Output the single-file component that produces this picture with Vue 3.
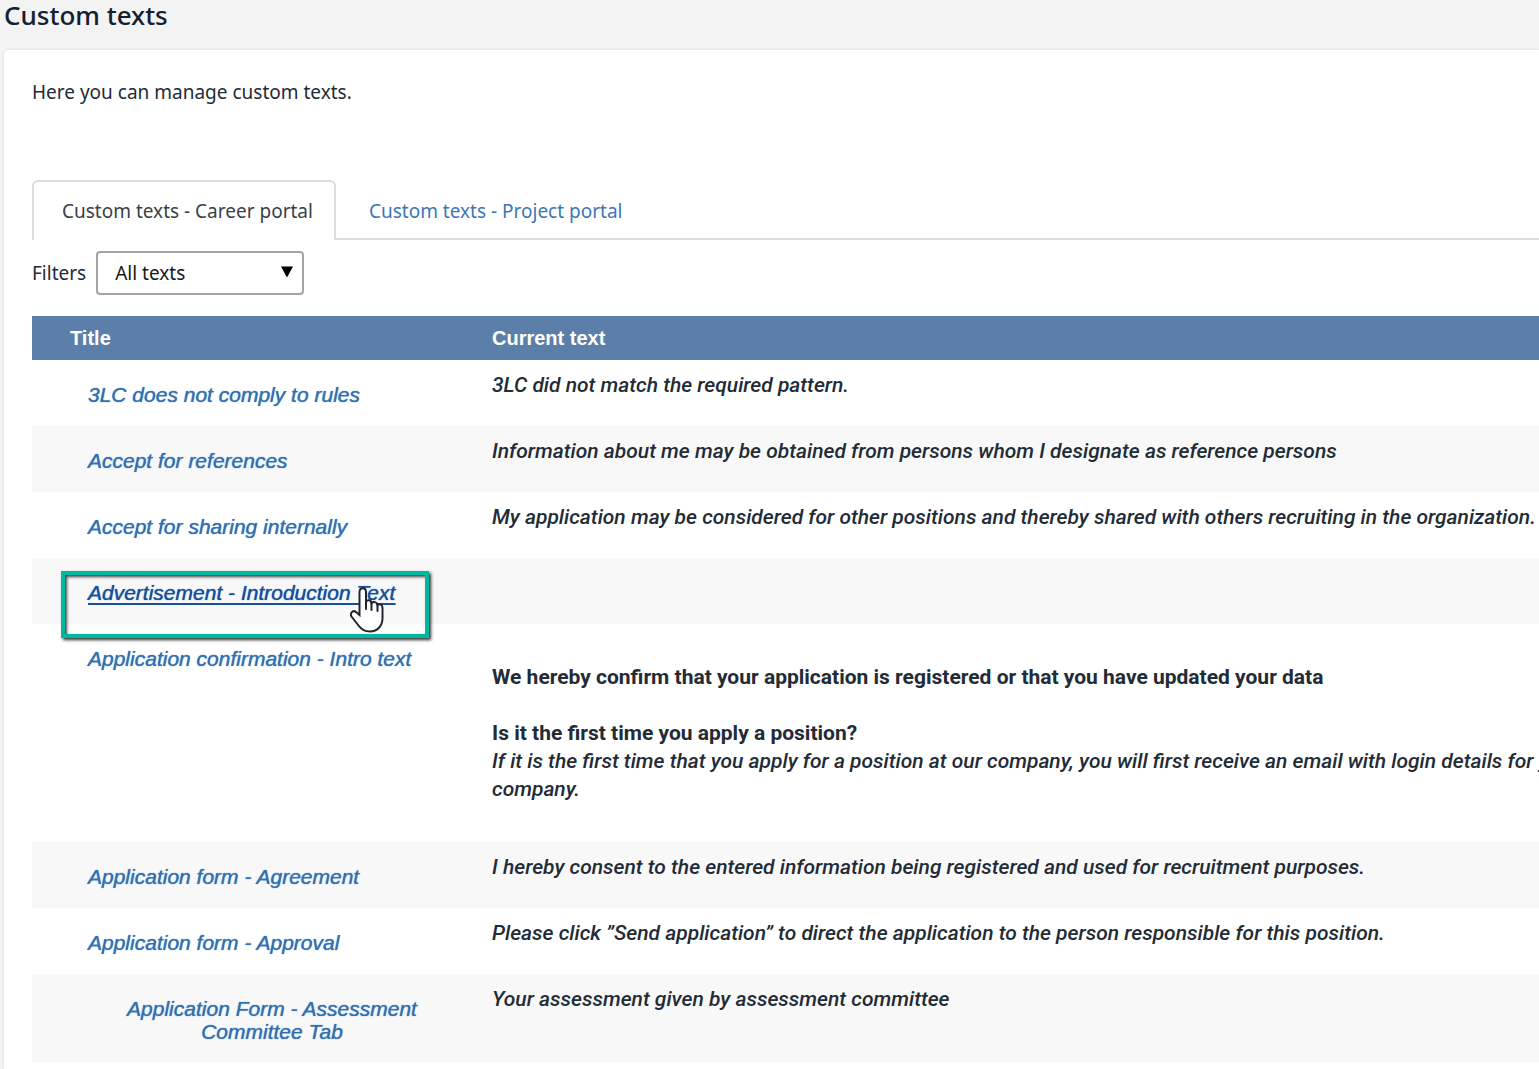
<script setup>
import { ref } from 'vue'

const filter = ref('all')
const rows = [
  { title: '3LC does not comply to rules', text: '3LC did not match the required pattern.' },
  { title: 'Accept for references', text: 'Information about me may be obtained from persons whom I designate as reference persons' },
  { title: 'Accept for sharing internally', text: 'My application may be considered for other positions and thereby shared with others recruiting in the organization.' },
  { title: 'Advertisement - Introduction Text', text: '', active: true },
  { title: 'Application confirmation - Intro text', rich: true },
  { title: 'Application form - Agreement', text: 'I hereby consent to the entered information being registered and used for recruitment purposes.' },
  { title: 'Application form - Approval', text: 'Please click ”Send application” to direct the application to the person responsible for this position.' },
  { title: 'Application Form - Assessment Committee Tab', text: 'Your assessment given by assessment committee' },
]
</script>

<template>
  <div class="page">
    <h1>Custom texts</h1>
    <main class="card">
      <p class="intro">Here you can manage custom texts.</p>
      <nav class="tabs">
        <a class="tab current" href="#career">Custom texts - Career portal</a>
        <a class="tab" href="#project">Custom texts - Project portal</a>
      </nav>
      <div class="filters">
        <label for="filter">Filters</label>
        <div class="select">
          <select id="filter" v-model="filter">
            <option value="all">All texts</option>
          </select>
          <svg class="arrow" width="12" height="12" viewBox="0 0 12 12" aria-hidden="true"><path d="M0 0.5h12L6 11.5z" /></svg>
        </div>
      </div>
      <table>
        <colgroup>
          <col class="col-title" />
          <col />
        </colgroup>
        <thead>
          <tr><th class="title">Title</th><th class="text">Current text</th></tr>
        </thead>
        <tbody>
          <tr v-for="row in rows" :key="row.title">
            <td class="title">
              <a href="#edit" :class="{ active: row.active }">{{ row.title }}</a>
              <template v-if="row.active">
                <span class="highlight"></span>
                <svg class="pointer" width="34" height="46" viewBox="0 0 34 46" aria-hidden="true">
                  <path d="M9.500 28V5C9.500 0 16 0 16 5V15C17 12.500 21 12.500 21.500 16C23.500 14 27 15 27.500 18C30 16.500 32.500 17.500 32.500 21V31C32.500 39 27.500 44.500 20 44.500C15 44.500 11 42 8.500 38.500L1.500 29.500C-0.500 26.500 3 22.500 6 25z" />
                  <path d="M16 13v9M21.500 15v8M27.500 17v7" />
                </svg>
              </template>
            </td>
            <td class="text">
              <template v-if="row.rich">
                <br /><strong>We hereby confirm that your application is registered or that you have updated your data</strong><br />
                <br /><strong>Is it the first time you apply a position?</strong><br />
                If it is the first time that you apply for a position at our company, you will first receive an email with login details for y<br />
                company.<br /><br />
              </template>
              <template v-else>{{ row.text }}</template>
            </td>
          </tr>
        </tbody>
      </table>
    </main>
  </div>
</template>

<style>
body {
  margin: 0;
  background: #f3f3f3;
}
</style>

<style scoped>
.page {
  min-height: 100vh;
  display: flex;
  flex-direction: column;
  overflow: hidden;
  box-sizing: border-box;
  padding-left: 4px;
  font-family: "Noto Sans", "Open Sans", sans-serif;
  font-size: 19px;
  line-height: 28px;
  color: #222b36;
}
h1 {
  margin: 0 0 20px;
  font-size: 26px;
  line-height: 30px;
  font-weight: 500;
  color: #14202f;
}
.card {
  flex: 1;
  padding: 28px 0 6px 28px;
  background: #fff;
  border-top-left-radius: 5px;
  box-shadow: 0 0 3px #d5d5da;
}
.intro {
  margin: 0 0 74px;
}
.tabs {
  display: flex;
  border-bottom: 2px solid #ddd;
}
.tab {
  margin-bottom: -2px;
  padding: 15px 21px 15px 28px;
  border: 2px solid transparent;
  border-bottom: 0;
  border-radius: 6px 6px 0 0;
  color: #3e76b5;
  text-decoration: none;
}
.current {
  margin-right: 3px;
  border-color: #ddd;
  background: #fff;
  color: #3a3f47;
}
.filters {
  display: flex;
  align-items: center;
  gap: 10px;
  margin: 11px 0 21px;
}
.select {
  position: relative;
  width: 208px;
}
select {
  display: block;
  width: 100%;
  height: 44px;
  padding: 0 17px;
  border: 2px solid #a5a5a5;
  border-radius: 4px;
  background: #fff;
  appearance: none;
  font: inherit;
  color: #14181f;
}
.arrow {
  position: absolute;
  top: 15px;
  right: 11px;
  pointer-events: none;
}
table {
  width: 100%;
  table-layout: fixed;
  border-collapse: collapse;
  font-family: Roboto, sans-serif;
  font-size: 21px;
}
.col-title {
  width: 442px;
}
th {
  height: 44px;
  background: #5b7fa8;
  color: #fff;
  font-family: "Liberation Sans", sans-serif;
  font-size: 20px;
  font-weight: 700;
  text-align: left;
}
th, td {
  padding: 0;
}
td {
  height: 66px;
  box-sizing: border-box;
  vertical-align: top;
  font-style: italic;
  font-weight: 500;
}
tbody tr:nth-child(even) {
  background: #f8f8f8;
}
.title {
  position: relative;
  padding-left: 38px;
}
.text {
  padding-left: 18px;
  white-space: nowrap;
}
td.text {
  padding-top: 11px;
  padding-bottom: 11px;
}
strong {
  font-style: normal;
  font-weight: 700;
}
.title a {
  display: block;
  width: fit-content;
  padding: 23px 18px 19px;
  font-family: "Liberation Sans", sans-serif;
  line-height: 23px;
  text-align: center;
  text-decoration: none;
  text-shadow: 0 0 1px currentColor;
  color: #3370b0;
}
.title a.active {
  color: #164f9c;
  text-decoration: underline;
  text-decoration-thickness: 2px;
  text-underline-offset: 3px;
}
.highlight {
  position: absolute;
  z-index: 1;
  top: 13px;
  left: 29px;
  width: 360px;
  height: 59px;
  border: 4px solid #00b89f;
  box-shadow: 2px 2px 3px #333, inset 2px 2px 3px #444;
  pointer-events: none;
}
.pointer {
  position: absolute;
  z-index: 2;
  top: 29px;
  left: 318px;
  fill: #fff;
  stroke: #20242c;
  stroke-width: 2;
  stroke-linecap: round;
  pointer-events: none;
}
</style>
